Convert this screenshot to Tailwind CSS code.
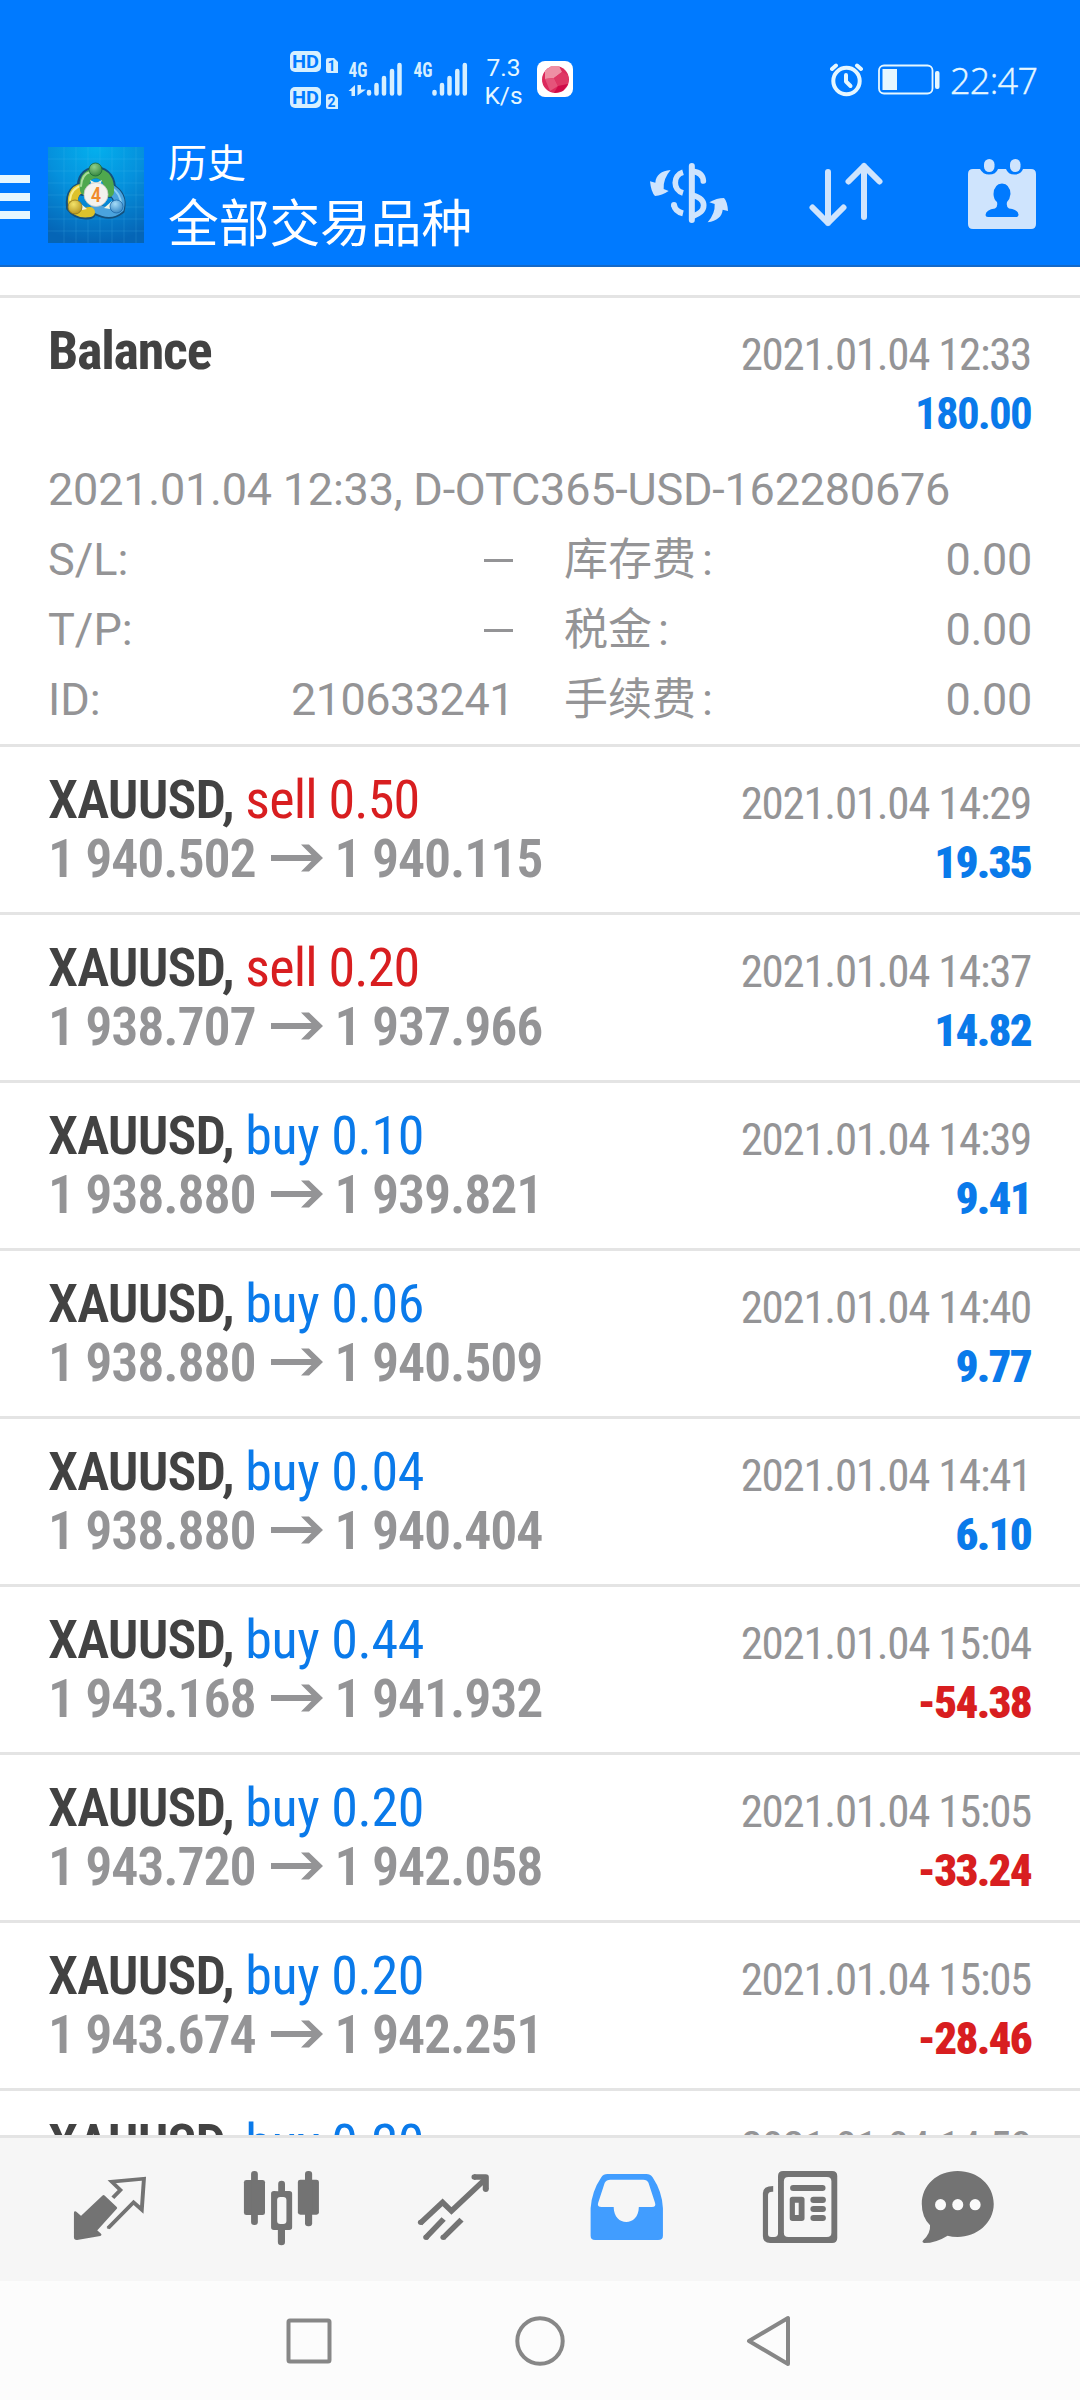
<!DOCTYPE html>
<html lang="zh-CN">
<head>
<meta charset="utf-8">
<title>历史</title>
<script src="https://cdn.jsdelivr.net/npm/@tailwindcss/browser@4"></script>
</head>
<body class="w-[1080px] h-[2400px] overflow-hidden bg-white flex flex-col font-[Roboto,'Noto_Sans_CJK_SC',sans-serif] text-[#949496]">

<header class="h-[267px] shrink-0 bg-[#007aff] border-b-2 border-[#1469c8] text-[#e6f7ff] flex flex-col">
  <!-- status bar -->
  <div class="h-[130px] shrink-0 flex items-start pt-[48px] pl-[290px] pr-[44px]">
    <svg class="w-[48px] h-[64px] shrink-0" viewBox="290 48 48 64" fill="#d6efff">
      <rect x="290" y="51" width="31" height="21" rx="5"/>
      <rect x="290" y="87" width="31" height="21" rx="5"/>
      <path d="M326 60q0-2 2-2h6l4 4v11h-10q-2 0-2-2zM326 96q0-2 2-2h6l4 4v11h-10q-2 0-2-2z"/>
      <g fill="#007aff" class="font-[Roboto] font-bold" text-anchor="middle">
        <text x="305.500" y="68.200" font-size="19" textLength="27" lengthAdjust="spacingAndGlyphs">HD</text>
        <text x="305.500" y="104.200" font-size="19" textLength="27" lengthAdjust="spacingAndGlyphs">HD</text>
        <text x="331.500" y="71.300" font-size="14">1</text>
        <text x="331.500" y="107.300" font-size="14">2</text>
      </g>
    </svg>
    <svg class="w-[120px] h-[40px] ml-[10px] mt-[12px] shrink-0" viewBox="348 60 120 40" fill="#d6efff" stroke="#d6efff">
      <g stroke="none" class="font-['Roboto_Condensed'] font-bold" font-size="19.500">
        <text x="348.500" y="77.300" textLength="19" lengthAdjust="spacingAndGlyphs">4G</text>
        <text x="413.500" y="77.300" textLength="19" lengthAdjust="spacingAndGlyphs">4G</text>
      </g>
      <path stroke="none" d="M348.500 91l6.500-6v11h-3.500v-5zM357.500 85h3.500v4.500h5l-8.500 6z"/>
      <path stroke-width="4.500" stroke-linecap="round" d="M369 92v1.500M376.500 85v8.500M384 78v15.500M392 71v22.500M399.500 65v28.500M434.500 92v1.500M442 85v8.500M449.500 78v15.500M457.300 71v22.500M464.800 65v28.500"/>
    </svg>
    <div class="w-[37px] ml-[17px] mt-[6px] flex flex-col items-center text-[24.500px] leading-[27.500px] whitespace-nowrap"><span>7.3</span><span>K/s</span></div>
    <svg class="w-[36px] h-[36px] ml-[15px] mt-[13px] shrink-0" viewBox="0 0 36 36">
      <rect width="36" height="36" rx="8" fill="#fff"/>
      <circle cx="18.500" cy="18.500" r="13.500" fill="#dc2a5c"/>
      <path d="M8 10l6-5 8 0 3 6-8 6-9 1z" fill="#ee8fa4"/>
      <path d="M8 18l9-1 4 8-8 5z" fill="#e5547a"/>
      <path d="M25 11l6 3 0 9-10 2-4-8z" fill="#de3764"/>
      <path d="M21 25l10-2-5 7-9 2z" fill="#cf0a48"/>
    </svg>
    <svg class="w-[111px] h-[36px] ml-auto mt-[14px] shrink-0" viewBox="830 62 111 36" fill="none" stroke="#e6f7ff">
      <circle cx="846.500" cy="81" r="13.200" stroke-width="4"/>
      <path d="M846 75v6.500l4.500 4.500" stroke-width="4" stroke-linecap="round" stroke-linejoin="round"/>
      <path d="M832 69l4-3.500M861 69l-4-3.500" stroke-width="4" stroke-linecap="round"/>
      <rect x="879" y="65.500" width="53.500" height="28" rx="5" stroke-width="1.800"/>
      <path d="M882.500 69h14.500v21h-14.500z" fill="#e6f7ff" stroke="none"/>
      <rect x="935" y="71" width="4.500" height="18" rx="2" fill="#e6f7ff" stroke="none"/>
    </svg>
    <span class="w-[86px] ml-[9px] mt-[8px] text-[36px] leading-[50px] font-['Open_Sans',sans-serif] font-light tracking-[-0.700px] [-webkit-text-stroke:0.400px_#e6f7ff]">22:47</span>
  </div>
  <!-- app bar -->
  <div class="flex items-start">
    <div class="w-[30px] mt-[45px] flex flex-col gap-[10px]">
      <i class="h-[8px] bg-[#e6f7ff]"></i><i class="h-[8px] bg-[#e6f7ff]"></i><i class="h-[8px] bg-[#e6f7ff]"></i>
    </div>
    <svg class="w-[96px] h-[96px] ml-[18px] mt-[17px] shrink-0" viewBox="4 4 96 96">
      <defs>
        <radialGradient id="bg" cx=".5" cy="0" r="1"><stop offset="0" stop-color="#04b0ee"/><stop offset=".5" stop-color="#0590dc"/><stop offset="1" stop-color="#0565b6"/></radialGradient>
        <radialGradient id="gg" cx=".4" cy=".3" r=".8"><stop offset="0" stop-color="#8fd08a"/><stop offset="1" stop-color="#2b7f38"/></radialGradient>
        <radialGradient id="gy" cx=".4" cy=".3" r=".8"><stop offset="0" stop-color="#f3e36a"/><stop offset="1" stop-color="#b08d18"/></radialGradient>
        <radialGradient id="gb" cx=".4" cy=".3" r=".8"><stop offset="0" stop-color="#a5dcf8"/><stop offset="1" stop-color="#2b7fc0"/></radialGradient>
      </defs>
      <path fill="url(#bg)" d="M4 4h96v96H4z"/>
      <path stroke="#5cc4f5" stroke-opacity=".22" stroke-width=".8" d="M20 4v96M32 4v96M44 4v96M56 4v96M68 4v96M80 4v96M92 4v96M4 16h96M4 28h96M4 40h96M4 52h96M4 64h96M4 76h96M4 88h96"/>
      <g fill="none">
        <g stroke="#14507c" stroke-width="12" stroke-linecap="round">
          <path d="M39 47Q37 31 52 29Q67 31 66 49"/><path d="M42 45Q26 45 28 64Q34 72 46 70"/><path d="M66 46Q78 53 75 66Q66 73 54 67"/>
        </g>
        <path d="M66 46Q78 53 75 65Q66 73 52 65" stroke="#4aa3de" stroke-width="10" stroke-linecap="round"/>
        <path d="M67 44Q77 51 77 61" stroke="#8fd0f2" stroke-width="2" stroke-linecap="round"/>
        <path d="M42 45Q27 45 29 63Q34 71 46 69" stroke="#dcc22c" stroke-width="10" stroke-linecap="round"/>
        <path d="M39 42Q27 45 26 57" stroke="#f7ec8c" stroke-width="2" stroke-linecap="round"/>
        <path d="M41 47Q38 32 52 30Q66 32 65 49" stroke="#4fa84e" stroke-width="10" stroke-linecap="round"/>
        <path d="M37 43Q38 31 46 29" stroke="#a9dd9b" stroke-width="2" stroke-linecap="round"/>
      </g>
      <path d="M46 37l6 3 6-3-2 5h-8zM36 60l7 6-5 1zM68 58l-8 7 6 1z" fill="#eef6e8"/>
      <circle cx="51.500" cy="26.500" r="6.500" fill="url(#gg)" stroke="#1d6a3a" stroke-width=".8"/>
      <circle cx="31" cy="64" r="7" fill="url(#gy)" stroke="#8a7420" stroke-width=".8"/>
      <circle cx="72.500" cy="63.500" r="6.500" fill="url(#gb)" stroke="#1f68a8" stroke-width=".8"/>
      <circle cx="52" cy="51.500" r="12" fill="#f4f2ee" stroke="#c9c9c4" stroke-width=".8"/>
      <text x="52" y="59" text-anchor="middle" font-size="21" class="font-['Roboto_Condensed'] font-medium" fill="#f08a2c">4</text>
    </svg>
    <div class="ml-[24px] flex flex-col whitespace-nowrap text-white font-['Noto_Sans_CJK_SC',sans-serif]">
      <span class="text-[39px] leading-[60px] h-[60px]">历史</span>
      <span class="text-[50.700px] leading-[60px] h-[60px]">全部交易品种</span>
    </div>
    <svg class="w-[90px] h-[84px] ml-auto mt-[20px] shrink-0" viewBox="0 0 270 252" fill="#cfe4fd">
      <path d="M80 60C52 63 36 74 34 98L18 94Q21 126 33 138Q54 136 74 123L59 117Q57 86 80 60z"/>
      <path d="M191 217C219 212 234 200 236 179L252 183Q250 154 240 144Q218 144 196 157L212 162Q214 190 191 217z"/>
      <g fill="none" stroke="#cfe4fd">
        <path d="M143.500 48v162" stroke-width="18" stroke-linecap="round"/>
        <path d="M146 64C165 66 177 76 178 93" stroke-width="17" stroke-linecap="round"/>
        <path d="M146 136C168 142 179 150 179 166C179 182 168 190 146 199" stroke-width="17"/>
        <path d="M117 67C86 76 86 120 117 129" stroke-width="17"/>
        <path d="M117 190C100 186 92 176 90 165" stroke-width="18"/>
      </g>
      <circle cx="90" cy="165" r="9"/>
    </svg>
    <svg class="w-[76px] h-[66px] ml-[73px] mt-[31px] shrink-0" viewBox="807 161 76 66" fill="none" stroke="#cfe4fd" stroke-width="6" stroke-linecap="round" stroke-linejoin="round">
      <path d="M828 172v51M812.500 207.500L828 223l15.500-15.500M864 217v-51M848.500 181.500L864 166l15.500 15.500"/>
    </svg>
    <svg class="w-[72px] h-[76px] ml-[83px] mr-[42px] mt-[27px] shrink-0" viewBox="966 157 72 76">
      <path fill="#cfe4fd" d="M973 169H980Q983 174.500 989 174.500Q996 174.500 998 169H1006Q1008 174.500 1014.500 174.500Q1021 174.500 1023 169H1031Q1036 169 1036 174V224Q1036 229 1031 229H973Q968 229 968 224V174Q968 169 973 169z"/>
      <rect x="984" y="159" width="10.500" height="13" rx="5.200" fill="#cfe4fd"/>
      <rect x="1010" y="159" width="10.500" height="13" rx="5.200" fill="#cfe4fd"/>
      <path fill="#007aff" d="M1002 183.500Q1010 184 1010.500 194Q1010 199 1007 202Q1006 207 1009 208.500Q1018 209.500 1018.500 214.500V215Q1018.500 217 1016 217H988Q985.500 217 985.500 215Q986 209.500 995 208.500Q998 207 997 202Q993.500 199 993.500 194Q994 184 1002 183.500z"/>
    </svg>
  </div>
</header>

<main class="flex-1 min-h-0 overflow-hidden pt-[28px]">
  <section class="h-[449px] border-t-3 border-[#e4e4e4] pt-[23px] px-[48px] text-[45px]">
    <div class="h-[59px] leading-[59px] flex justify-between items-baseline font-['Roboto_Condensed',sans-serif]">
      <b class="text-[54px] text-[#424242] tracking-[-1.250px]">Balance</b><span class="tracking-[-1.300px] mr-px relative top-px">2021.01.04 12:33</span>
    </div>
    <div class="h-[62px] leading-[68px] text-right font-['Roboto_Condensed',sans-serif]"><b class="text-[#0a7aea] tracking-[-1.800px] mr-px">180.00</b></div>
    <div class="mt-[13px] h-[70px] leading-[70px] whitespace-nowrap tracking-[-0.220px]">2021.01.04 12:33, D-OTC365-USD-162280676</div>
    <div class="grid grid-cols-[465px_1fr] gap-x-[51px] leading-[70px]">
      <div class="h-[70px] flex justify-between items-center"><span>S/L:</span><i class="w-[29px] h-[3px] bg-[#949496]"></i></div>
      <div class="h-[70px] flex justify-between"><span class="flex"><span class="text-[44px] leading-[71px]">库存费</span><span class="ml-[6px]">:</span></span><span class="tracking-[-0.300px]">0.00</span></div>
      <div class="h-[70px] flex justify-between items-center"><span>T/P:</span><i class="w-[29px] h-[3px] bg-[#949496]"></i></div>
      <div class="h-[70px] flex justify-between"><span class="flex"><span class="text-[44px] leading-[71px]">税金</span><span class="ml-[6px]">:</span></span><span class="tracking-[-0.300px]">0.00</span></div>
      <div class="h-[70px] flex justify-between"><span>ID:</span><span class="tracking-[-0.500px] -mr-px">210633241</span></div>
      <div class="h-[70px] flex justify-between"><span class="flex"><span class="text-[44px] leading-[71px]">手续费</span><span class="ml-[6px]">:</span></span><span class="tracking-[-0.300px]">0.00</span></div>
    </div>
  </section>
  <div id="deals"></div>
</main>

<nav class="h-[146px] shrink-0 bg-[#f6f6f6] border-t-3 border-[#e4e4e4] px-[24px] pt-[22px] grid grid-cols-6 justify-items-center">
  <svg class="w-[120px] h-[96px]" viewBox="140 240 336 288" preserveAspectRatio="none" fill="#737373" stroke="#737373" stroke-linejoin="round">
    <path stroke-width="8" d="M290 349L324 384L267 451L280 464L215 476Q211 476 211 472V398L227 413z"/>
    <path fill="none" stroke-width="11" stroke-linejoin="miter" d="M316 353L337 330L313 305L403 296L397 389L374 367L303 444"/>
    <circle cx="303" cy="443" r="3"/>
  </svg>
  <svg class="w-[120px] h-[96px]" viewBox="621.6 240 336 288" preserveAspectRatio="none" fill="#737373">
    <rect x="683" y="300" width="59" height="105" rx="7"/><rect x="703" y="273" width="19" height="162" rx="9"/>
    <rect x="834" y="299" width="59" height="105" rx="7"/><rect x="854" y="273" width="20" height="166" rx="9"/>
    <path fill-rule="evenodd" d="M779 334V312a9 9 0 0 1 19 0V333H810q8 0 8 8V442q0 8-8 8H798V486a9 9 0 0 1-20 0V450H767q-8 0-8-8V341q0-8 8-8zM785 351q-9 0-9 9V423q0 9 9 9H793q9 0 9-9V360q0-9-9-9z"/>
  </svg>
  <svg class="w-[120px] h-[96px]" viewBox="1103 240 336 288" preserveAspectRatio="none" fill="none" stroke="#737373" stroke-width="16">
    <path d="M1176 430L1239 367L1264 393L1358 298"/>
    <path stroke-linejoin="round" d="M1327 291H1360V328" stroke-width="17"/>
    <path d="M1242 417L1191 474M1292 419L1240 474"/>
    <g fill="#737373" stroke="none"><circle cx="1178" cy="427" r="8"/><circle cx="1193" cy="472" r="8"/><circle cx="1241" cy="472" r="8"/><circle cx="1328" cy="291" r="8"/><circle cx="1360" cy="328" r="8"/></g>
  </svg>
  <svg class="w-[120px] h-[96px]" viewBox="75.5 240 348.5 288" preserveAspectRatio="none" fill="#419dff">
    <path fill-rule="evenodd" d="M196 282H309Q320 282 327 292Q355 335 357 385V467Q357 480 343 480H160Q147 480 147 467V385Q150 335 178 292Q184 282 196 282zM204 299Q193 299 188 308L169 368Q165 381 179 381H214C214 441 287 441 287 381H325Q338 381 334 368L315 308Q311 299 300 299z"/>
  </svg>
  <svg class="w-[120px] h-[96px]" viewBox="574.75 240 348.5 288" preserveAspectRatio="none" fill="#737373">
    <path fill-rule="evenodd" d="M706 273H848Q863 273 863 288V474Q863 489 848 489H668Q647 489 647 468V340Q647 318 677 318V335Q662 334 662 345V462Q662 471 671 471H680Q691 471 691 460V288Q691 273 706 273zM721 291Q708 291 708 304V458Q708 471 721 471H833Q846 471 846 458V304Q846 291 833 291z"/>
    <rect x="726" y="315" width="103" height="18" rx="9"/>
    <path fill-rule="evenodd" d="M735 350H760q8 0 8 8V415q0 8-8 8H733q-8 0-8-8V358q0-8 8-8zM740 368V405H751V368z"/>
    <rect x="785" y="350" width="45" height="19" rx="9"/><rect x="785" y="378" width="45" height="18" rx="9"/><rect x="785" y="405" width="45" height="18" rx="9"/>
  </svg>
  <svg class="w-[120px] h-[96px]" viewBox="1074.8 240 348.5 288" preserveAspectRatio="none" fill="#737373">
    <path d="M1213 273C1272 273 1318 315 1318 372C1318 429 1268 471 1213 471Q1197 471 1184 467Q1150 489 1116 489Q1108 487 1113 481Q1135 460 1133 436Q1109 411 1109 372C1109 315 1154 273 1213 273z"/>
    <g fill="#fafafa"><ellipse cx="1163.500" cy="374" rx="16" ry="17"/><ellipse cx="1213.500" cy="374" rx="16" ry="17"/><ellipse cx="1264" cy="374" rx="16" ry="17"/></g>
  </svg>
</nav>

<footer class="h-[119px] shrink-0 bg-[#fcfcfc] px-[193px] grid grid-cols-3 justify-items-center items-center">
  <svg class="w-[60px] h-[60px]" viewBox="0 0 60 60" fill="none" stroke="#878787" stroke-width="4"><rect x="9.500" y="9.500" width="41" height="41" rx="1.500"/></svg>
  <svg class="w-[60px] h-[60px]" viewBox="0 0 60 60" fill="none" stroke="#878787" stroke-width="4"><circle cx="30" cy="30" r="22.700"/></svg>
  <svg class="w-[60px] h-[60px]" viewBox="0 0 60 60" fill="none" stroke="#878787" stroke-width="4" stroke-linejoin="round"><path d="M47 7V53L8 30z"/></svg>
</footer>

<script>
  const deals = [
    ['sell', '0.50', '1 940.502', '1 940.115', '14:29', '19.35'],
    ['sell', '0.20', '1 938.707', '1 937.966', '14:37', '14.82'],
    ['buy', '0.10', '1 938.880', '1 939.821', '14:39', '9.41'],
    ['buy', '0.06', '1 938.880', '1 940.509', '14:40', '9.77'],
    ['buy', '0.04', '1 938.880', '1 940.404', '14:41', '6.10'],
    ['buy', '0.44', '1 943.168', '1 941.932', '15:04', '-54.38'],
    ['buy', '0.20', '1 943.720', '1 942.058', '15:05', '-33.24'],
    ['buy', '0.20', '1 943.674', '1 942.251', '15:05', '-28.46'],
    ['buy', '0.20', '1 943.674', '1 942.251', '14:58', '-28.46'],
  ];
  const blue = 'text-[#0a7aea]', red = 'text-[#d81e20]';
  document.getElementById('deals').innerHTML = deals.map(([side, lots, open, close, time, profit]) => `
    <article class="h-[168px] border-t-3 border-[#e4e4e4] pt-[23px] px-[48px] text-[54px] whitespace-nowrap font-['Roboto_Condensed',sans-serif]">
      <div class="h-[59px] leading-[59px] flex justify-between items-baseline">
        <span><b class="text-[#424242] font-semibold tracking-[-0.900px]">XAUUSD, </b><span class="${side === 'buy' ? `tracking-[-0.400px] ${blue}` : `tracking-[-0.800px] ${red}`}">${side} ${lots}</span></span>
        <span class="text-[45px] tracking-[-1.300px] mr-px relative top-px">2021.01.04 ${time}</span>
      </div>
      <div class="h-[59px] leading-[59px] flex justify-between items-baseline font-semibold">
        <span class="tracking-[-1.150px] flex items-baseline">${open}<svg class="w-[52px] h-[28px] ml-[15px] mr-[12px] self-center -translate-y-px" viewBox="0 0 52 28" fill="#949496"><path d="M30 0.500H38L52 14L38 27.500H30L40.500 17H0V11H40.500z"/></svg>${close}</span>
        <b class="text-[45px] tracking-[-1.800px] mr-px relative top-px ${profit[0] === '-' ? red : blue}">${profit}</b>
      </div>
    </article>`).join('');
</script>
</body>
</html>
